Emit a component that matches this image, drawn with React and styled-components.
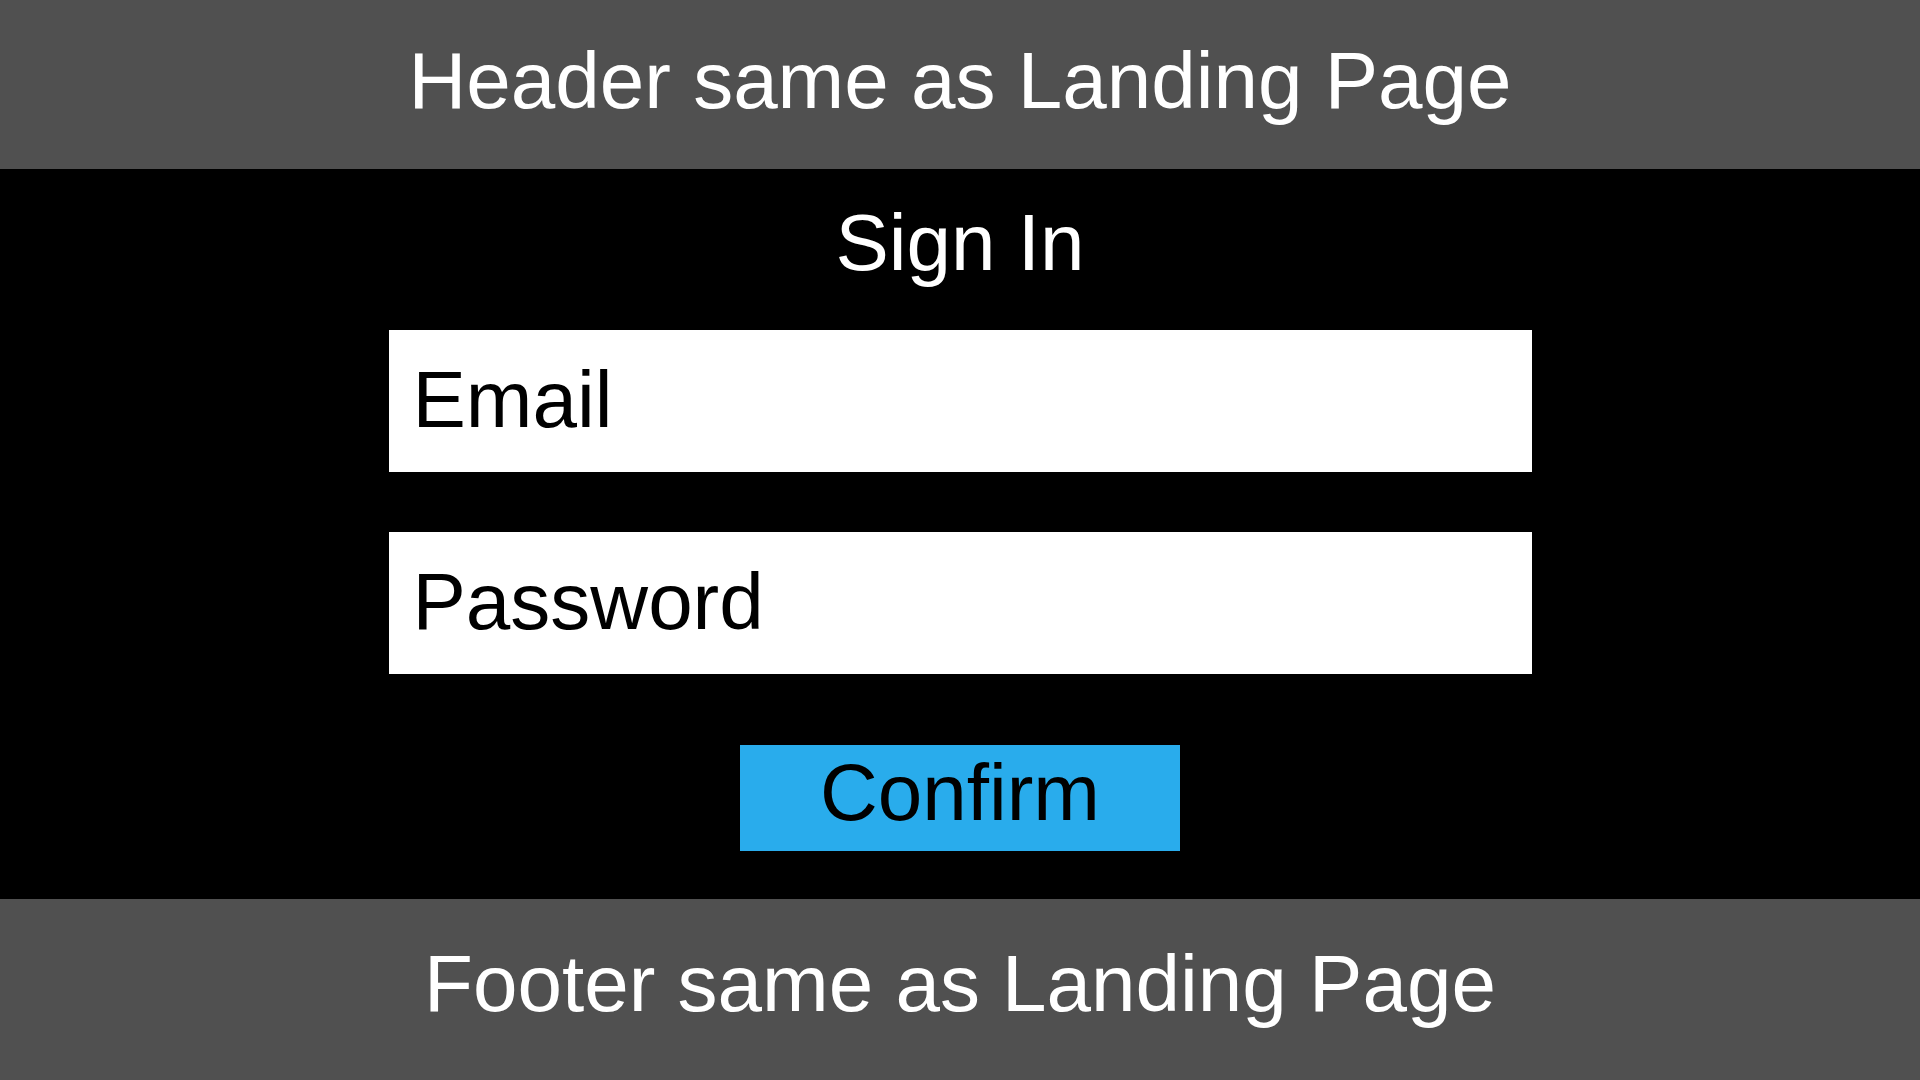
import React from 'react';
import styled, { createGlobalStyle } from 'styled-components';

const GlobalStyle = createGlobalStyle`
   html, body {
      margin:0;
      padding:0;
      background:#000;
   }
   * {
      box-sizing:border-box;
   }
`

const StyledPage = styled.div`
   width:1920px;
   height:1080px;
   display:flex;
   flex-direction:column;
   font-family:"Liberation Sans", Arial, sans-serif;
   font-size:80px;
`

const StyledBar = styled.div`
   flex-shrink:0;
   height:${props => props.height}px;
   background-color:#505050;
   color:#fff;
   display:flex;
   justify-content:center;
   align-items:center;
   line-height:92px;
   padding-bottom:${props => props.shift || 0}px;
`

const StyledMain = styled.main`
   flex:1;
   background-color:#000;
   display:flex;
   flex-direction:column;
   align-items:center;
   padding-top:28px;
`

const StyledTitle = styled.h1`
   margin:0 0 41px 0;
   font-size:80px;
   font-weight:normal;
   color:#fff;
   line-height:92px;
`

const StyledField = styled.div`
   width:1143px;
   height:142px;
   background-color:#fff;
   color:#000;
   display:flex;
   align-items:center;
   padding-left:24px;
   padding-bottom:3px;
   margin-bottom:${props => props.gap}px;
   line-height:92px;
`

const StyledButton = styled.button`
   width:440px;
   height:106px;
   border:none;
   border-radius:0;
   background-color:#29acec;
   color:#000;
   font-family:inherit;
   font-size:80px;
   line-height:92px;
   padding:0 0 10px 0;
   cursor:pointer;
`

const App = () => {
   return(
      <StyledPage>
         <GlobalStyle/>
         <StyledBar height={169} shift={8}>Header same as Landing Page</StyledBar>

         <StyledMain>
            <StyledTitle>Sign In</StyledTitle>
            <StyledField gap={60}>Email</StyledField>
            <StyledField gap={71}>Password</StyledField>
            <StyledButton>Confirm</StyledButton>
         </StyledMain>

         <StyledBar height={181} shift={12}>Footer same as Landing Page</StyledBar>
      </StyledPage>
   )
}

export default App
